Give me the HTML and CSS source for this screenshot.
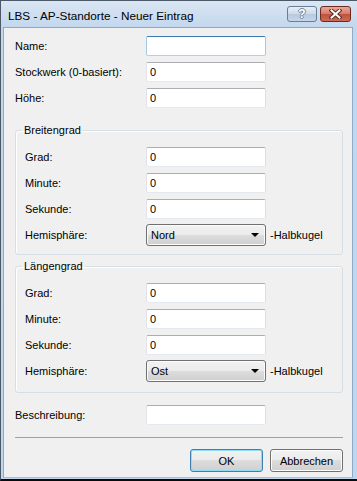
FILE: index.html
```html
<!DOCTYPE html>
<html lang="de">
<head>
    <meta charset="UTF-8">
    <meta name="viewport" content="width=device-width, initial-scale=1.0">
    <title>LBS - AP-Standorte - Neuer Eintrag</title>
    <link rel="stylesheet" href="styles.css">
</head>
<body>

    <div class="window">
        <div class="titlebar">
            <span class="caption">LBS - AP-Standorte - Neuer Eintrag</span>
            <div class="caption-buttons">
                <span class="cap-btn help">?</span>
                <span class="cap-btn close">
                    <svg width="13" height="10" viewBox="0 0 13 10">
                        <path d="M2.5 1.5 L10.5 8.5 M10.5 1.5 L2.5 8.5" stroke="#5a2a22" stroke-width="4" stroke-linecap="square"/>
                        <path d="M2.5 1.5 L10.5 8.5 M10.5 1.5 L2.5 8.5" stroke="#ffffff" stroke-width="2" stroke-linecap="square"/>
                    </svg>
                </span>
            </div>
        </div>

        <form action="" class="client" id="formEintrag">
            <div class="rows">
                <label for="name">Name:</label>
                <input type="text" id="name" class="field focus">

                <label for="stockwerk">Stockwerk (0-basiert):</label>
                <input type="text" id="stockwerk" class="field" value="0">

                <label for="hoehe">Höhe:</label>
                <input type="text" id="hoehe" class="field" value="0">
            </div>

            <fieldset class="group">
                <legend>Breitengrad</legend>
                <div class="rows">
                    <label for="bGrad">Grad:</label>
                    <input type="text" id="bGrad" class="field" value="0">

                    <label for="bMinute">Minute:</label>
                    <input type="text" id="bMinute" class="field" value="0">

                    <label for="bSekunde">Sekunde:</label>
                    <input type="text" id="bSekunde" class="field" value="0">

                    <label>Hemisphäre:</label>
                    <div class="hemi">
                        <div class="select"><span>Nord</span><span class="arrow"></span></div>
                        <span>-Halbkugel</span>
                    </div>
                </div>
            </fieldset>

            <fieldset class="group">
                <legend>Längengrad</legend>
                <div class="rows">
                    <label for="lGrad">Grad:</label>
                    <input type="text" id="lGrad" class="field" value="0">

                    <label for="lMinute">Minute:</label>
                    <input type="text" id="lMinute" class="field" value="0">

                    <label for="lSekunde">Sekunde:</label>
                    <input type="text" id="lSekunde" class="field" value="0">

                    <label>Hemisphäre:</label>
                    <div class="hemi">
                        <div class="select"><span>Ost</span><span class="arrow"></span></div>
                        <span>-Halbkugel</span>
                    </div>
                </div>
            </fieldset>

            <div class="rows desc">
                <label for="beschreibung">Beschreibung:</label>
                <input type="text" id="beschreibung" class="field">
            </div>

            <div class="separator"></div>

            <div class="actions">
                <button type="button" class="btn default">OK</button>
                <button type="button" class="btn">Abbrechen</button>
            </div>
        </form>
    </div>

</body>
</html>
```

FILE: styles.css
```css
* {
    margin: 0;
    padding: 0;
    box-sizing: border-box;
}

body {
    font-family: "Liberation Sans", Arial, sans-serif;
    font-size: 11px;
    color: #000;
    background-color: #c1d5ec;
}

.window {
    width: 357px;
    height: 481px;
    display: flex;
    flex-direction: column;
    border-top: 1px solid #4b5868;
    border-left: 1px solid #4b5868;
    border-bottom: 2px solid #0a0a0a;
    padding: 0 4px 1px 2px;
    background: linear-gradient(#dae6f3, #c3d7ed 26px, #c1d5ec);
}

.titlebar {
    height: 26px;
    display: flex;
    justify-content: space-between;
    padding: 0 2px 0 5px;
}

.caption {
    font-size: 11.75px;
    line-height: 25px;
    padding-top: 2px;
}

.caption-buttons {
    display: flex;
    gap: 3px;
    padding-top: 5px;
}

.cap-btn {
    width: 30px;
    height: 16px;
    border: 1px solid #6b7d92;
    border-radius: 3px;
    display: flex;
    align-items: center;
    justify-content: center;
}

.help {
    background: linear-gradient(#e6eef8, #cddaeb 50%, #b6c9e0 50%, #c6d6ea);
    color: #fff;
    font-weight: bold;
    font-size: 12px;
    text-shadow: 1px 0 0 #74859a, -1px 0 0 #74859a, 0 1px 0 #74859a, 0 -1px 0 #74859a;
}

.close {
    width: 31px;
    border-color: #6d2a22;
    background: linear-gradient(#e9a999, #d67b69 50%, #c1503b 50%, #cd6b56);
}

.client {
    flex: 1;
    display: flex;
    flex-direction: column;
    background-color: #f0f0f0;
    border: 1px solid #8fa9c9;
    border-bottom-color: #8ccbf0;
    padding: 8px 9px 0 11px;
}

.rows {
    display: grid;
    grid-template-columns: 131px 120px;
    grid-auto-rows: 20px;
    row-gap: 6px;
    align-items: center;
}

.group .rows {
    grid-template-columns: 121px auto;
}

.field {
    width: 120px;
    height: 20px;
    border: 1px solid;
    border-color: #abadb3 #dbdfe6 #e3e9ef #e2e3ea;
    border-radius: 2px;
    background-color: #fff;
    font: 11px "Liberation Sans", Arial, sans-serif;
    color: #000;
    padding: 0 3px;
    outline: none;
}

.field.focus {
    border-color: #3d7bad #a4c9e3 #b5cfe7 #a4c9e3;
}

.group {
    margin-top: 16px;
    padding: 10px 9px 9px;
    border: 1px solid #d5dfe5;
    border-radius: 3px;
    box-shadow: inset 1px 1px 0 #fff;
}

.group + .group {
    margin-top: 5px;
    padding-bottom: 11px;
}

legend {
    padding: 0 2px;
    margin-left: -3px;
    line-height: 13px;
}

.hemi {
    display: flex;
    align-items: center;
    gap: 4px;
}

.select {
    width: 120px;
    height: 22px;
    display: flex;
    align-items: center;
    justify-content: space-between;
    padding: 0 6px 0 4px;
    border: 1px solid #707070;
    border-radius: 3px;
    background: linear-gradient(#f2f2f2, #ebebeb 50%, #dddddd 50%, #cfcfcf);
    box-shadow: inset 0 0 0 1px #fcfcfc;
}

.arrow {
    width: 0;
    height: 0;
    border-top: 4px solid #000;
    border-left: 4px solid transparent;
    border-right: 4px solid transparent;
}

.desc {
    margin-top: 12px;
}

.separator {
    margin-top: 12px;
    border-top: 1px solid #a0a0a0;
}

.actions {
    display: flex;
    justify-content: flex-end;
    gap: 7px;
    margin-top: 11px;
}

.btn {
    width: 73px;
    height: 23px;
    font: 11px "Liberation Sans", Arial, sans-serif;
    color: #000;
    border: 1px solid #707070;
    border-radius: 3px;
    background: linear-gradient(#f2f2f2, #ebebeb 50%, #dddddd 50%, #cfcfcf);
    box-shadow: inset 0 0 0 1px #fcfcfc;
    cursor: pointer;
}

.btn.default {
    border-color: #3c7fb1;
    box-shadow: inset 0 0 0 1px #8fdcf8;
}
```
